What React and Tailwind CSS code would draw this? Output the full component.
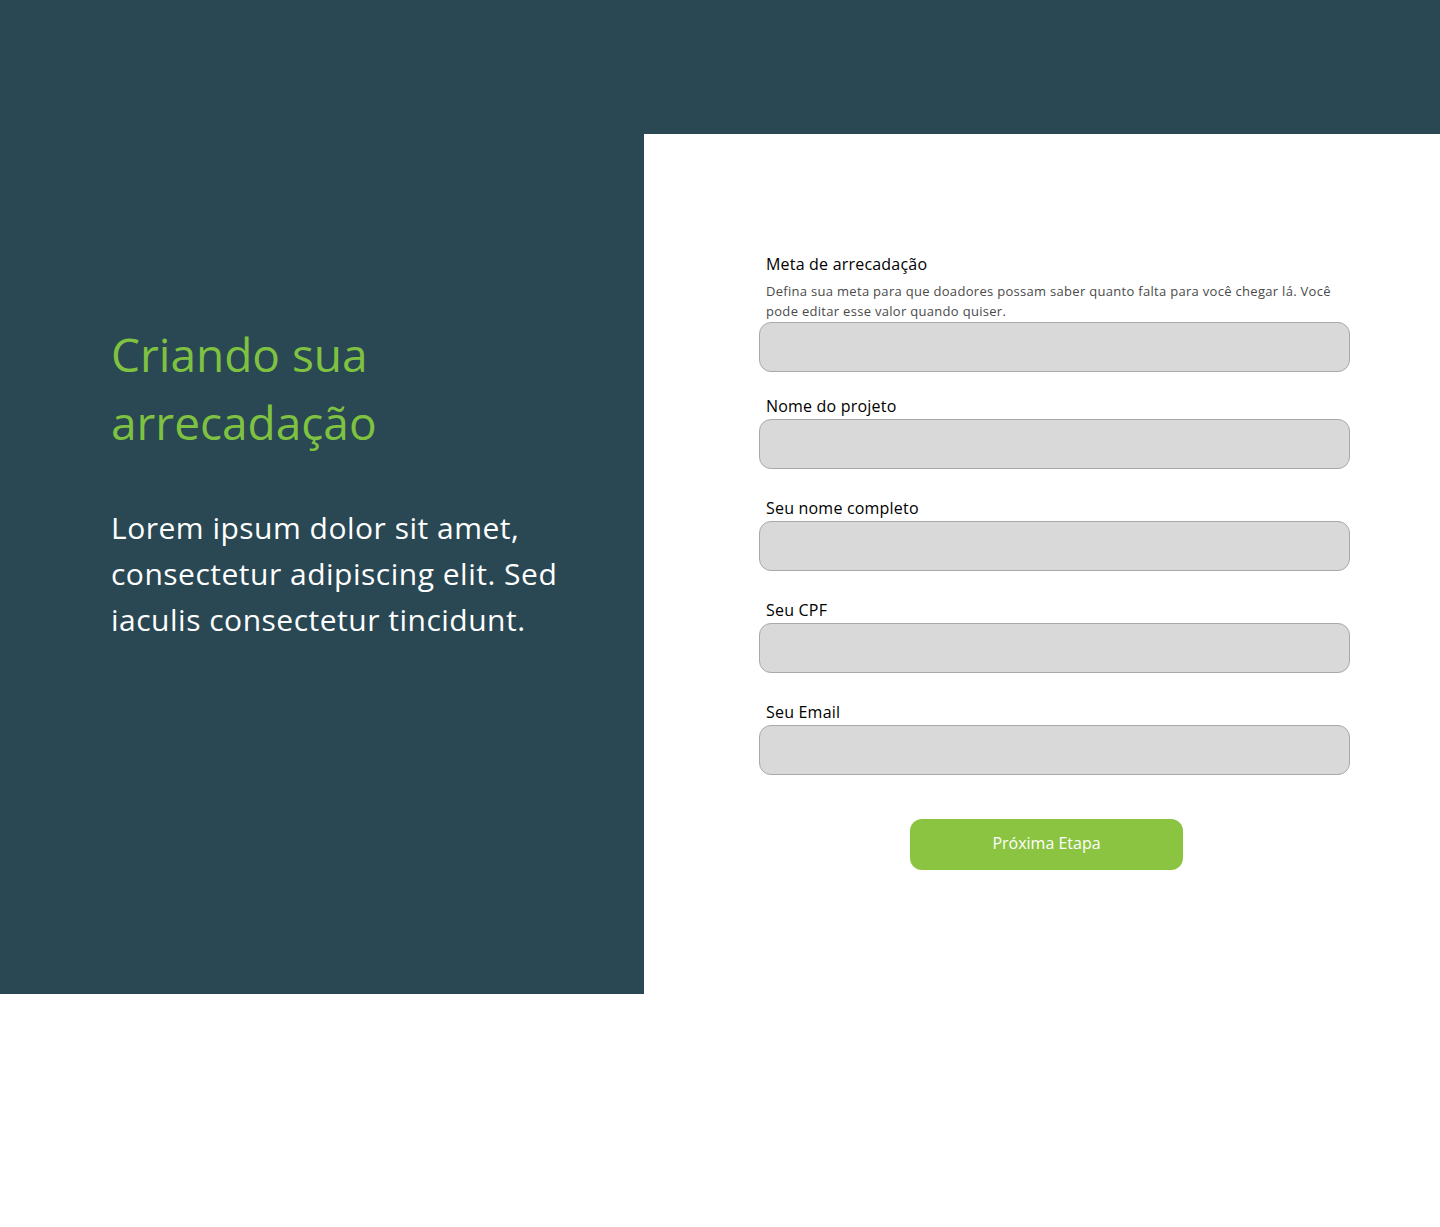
const FIELDS = [
  { label: 'Nome do projeto' },
  { label: 'Seu nome completo' },
  { label: 'Seu CPF' },
  { label: 'Seu Email' },
];

function Field({ label, hint, className = '' }) {
  return (
    <div className={`flex flex-col ${className}`}>
      <label className="pl-[7px] text-[16px] leading-[20px] tracking-[0.2px] text-black">{label}</label>
      {hint && (
        <p className="pl-[7px] pr-[10px] mt-[7px] text-[13px] leading-[20px] tracking-[0.3px] text-[#4a4a4a]">{hint}</p>
      )}
      <input
        type="text"
        className={`${hint ? 'mt-[1px]' : 'mt-[3px]'} h-[50px] w-full rounded-[12px] border border-[#a9a9a9] bg-[#d9d9d9] px-4 outline-none`}
      />
    </div>
  );
}

export default function App() {
  return (
    <div className="min-h-[1227px] bg-white font-['Open_Sans',sans-serif]">
      <div className="flex h-[994px] bg-[#294853]">
        {/* Left intro */}
        <div className="w-[644px] shrink-0 pl-[111px] pr-[60px] pt-[320px]">
          <h1 className="text-[46px] leading-[68px] text-[#7fc241]">
            Criando sua<br />arrecadação
          </h1>
          <p className="mt-[49px] text-[30px] leading-[46px] tracking-[0.5px] text-white">
            Lorem ipsum dolor sit amet, consectetur adipiscing elit. Sed iaculis consectetur tincidunt.
          </p>
        </div>

        {/* Form panel */}
        <div className="mt-[134px] flex-1 bg-white pt-[120px]">
          <form className="ml-[115px] w-[591px]">
            <Field
              label="Meta de arrecadação"
              hint="Defina sua meta para que doadores possam saber quanto falta para você chegar lá. Você pode editar esse valor quando quiser."
            />
            {FIELDS.map((f, i) => (
              <Field key={f.label} label={f.label} className={i === 0 ? 'mt-[24px]' : 'mt-[29px]'} />
            ))}
            <div className="mt-[44px] flex justify-center pr-[16px]">
              <button
                type="button"
                className="h-[51px] w-[273px] rounded-[12px] bg-[#8bc441] pb-[4px] text-[16px] text-white"
              >
                Próxima Etapa
              </button>
            </div>
          </form>
        </div>
      </div>
    </div>
  );
}
